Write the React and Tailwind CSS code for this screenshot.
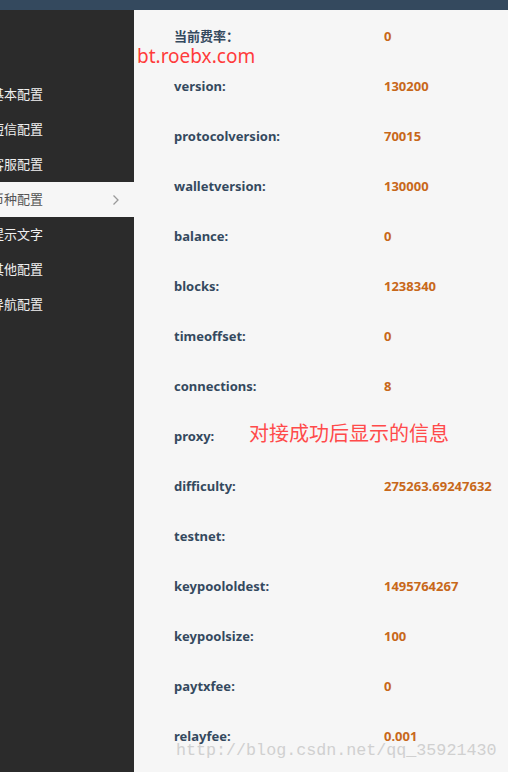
export default function App() {
  const menu = ['基本配置', '短信配置', '客服配置', '币种配置', '提示文字', '其他配置', '导航配置']
  const rows = [
    ['当前费率：', '0'],
    ['version:', '130200'],
    ['protocolversion:', '70015'],
    ['walletversion:', '130000'],
    ['balance:', '0'],
    ['blocks:', '1238340'],
    ['timeoffset:', '0'],
    ['connections:', '8'],
    ['proxy:', ''],
    ['difficulty:', '275263.69247632'],
    ['testnet:', ''],
    ['keypoololdest:', '1495764267'],
    ['keypoolsize:', '100'],
    ['paytxfee:', '0'],
    ['relayfee:', '0.001']
  ]

  return (
    <div className="relative w-[508px] h-[772px] overflow-hidden bg-[#f6f6f6]" style={{ fontFamily: '"Noto Sans", "Noto Sans CJK SC", sans-serif' }}>
      <div className="h-[10px] bg-[#34495e]" />
      <div className="flex h-[762px]">
        <div className="w-[134px] shrink-0 bg-[#2b2b2b] pt-[67px] overflow-hidden">
          {menu.map((item, i) => (
            <div
              key={item}
              className={`h-[35px] flex items-center justify-between pr-[14px] ${i === 3 ? 'bg-[#f6f6f6] text-[#555]' : 'text-[#f0f0f0]'}`}
            >
              <span className="ml-[-9px] text-[13px] leading-none">{item}</span>
              {i === 3 && (
                <svg width="8" height="12" viewBox="0 0 8 12" className="text-[#999]">
                  <path d="M1.5 1.5 L6 6 L1.5 10.5" fill="none" stroke="currentColor" strokeWidth="1.3" />
                </svg>
              )}
            </div>
          ))}
        </div>
        <div className="flex-1 pt-[2px]">
          {rows.map(([label, value]) => (
            <div key={label} className="h-[50px] flex items-center text-[13px] font-bold">
              <div className="w-[250px] pl-[40px] text-[#34495e]">{label}</div>
              <div className="text-[#c8681a]">{value}</div>
            </div>
          ))}
        </div>
      </div>
      <div className="absolute left-[137px] top-[47px] text-[19px] leading-none text-[#ff3b3b]">bt.roebx.com</div>
      <div className="absolute left-[249px] top-[424px] text-[20px] leading-none text-[#ff4a4a]">对接成功后显示的信息</div>
      <div className="absolute left-[176px] top-[743px] text-[16.7px] leading-none text-[#d0d0d0]" style={{ fontFamily: '"Liberation Mono", monospace' }}>
        http://blog.csdn.net/qq_35921430
      </div>
    </div>
  )
}
